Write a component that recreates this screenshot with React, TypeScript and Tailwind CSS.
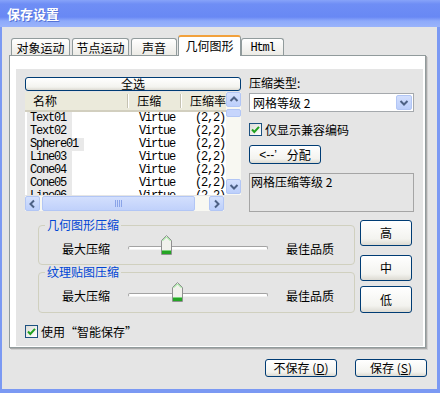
import React from "react";

const btn =
  "border border-[#003c74] rounded-[3px] bg-[linear-gradient(to_bottom,#ffffff,#f3f3ef_75%,#dcdad2)] flex items-center justify-center leading-[12px] text-[12px]";
const mono = "font-['Liberation_Mono',monospace] text-[12px] tracking-[-1.2px]";
const sbBtn =
  "w-[15px] h-[15px] shrink-0 rounded-[2px] border border-[#b2c6f5] bg-[linear-gradient(to_bottom,#d5e1fd,#bccffb)] flex items-center justify-center";

const rows = ["Text01", "Text02", "Sphere01", "Line03", "Cone04", "Cone05", "Line06"];

function Chevron({ dir }: { dir: "up" | "down" | "left" | "right" }) {
  const d = {
    up: "M1.5 6 L5 2.5 L8.5 6",
    down: "M1.5 3 L5 6.5 L8.5 3",
    left: "M6 1.5 L2.5 5 L6 8.5",
    right: "M3 1.5 L6.5 5 L3 8.5",
  }[dir];
  return (
    <svg width="10" height="10" viewBox="0 0 10 10">
      <path d={d} fill="none" stroke="#4d6185" strokeWidth="2" />
    </svg>
  );
}

function Check() {
  return (
    <div className="w-[13px] h-[13px] shrink-0 border border-[#1c5180] bg-[linear-gradient(135deg,#dcdcd7,#ffffff)] flex items-center justify-center">
      <svg width="11" height="11" viewBox="0 0 11 11">
        <path d="M2 5.5 L4.3 8 L9 2.8" fill="none" stroke="#21a121" strokeWidth="2" />
      </svg>
    </div>
  );
}

function Thumb() {
  return (
    <svg width="11" height="20" viewBox="0 0 11 20">
      <path d="M0.5 5.5 L5.5 0.5 L10.5 5.5 V19.5 H0.5 Z" fill="#f1f1ec" stroke="#8f9090" />
      <path d="M1.5 5.9 L5.5 1.9 L9.5 5.9" fill="none" stroke="#86e486" />
      <rect x="1" y="15" width="9" height="1" fill="#7fd67f" />
      <rect x="1" y="16" width="9" height="3" fill="#25a525" />
    </svg>
  );
}

function Slider({ pos }: { pos: number }) {
  return (
    <div className="relative ml-[18px] w-[140px] h-[20px]">
      <div className="absolute left-0 right-0 top-[7px] h-[4px] rounded-[2px] border border-[#a3a3a3] border-b-[#f4f4f4] bg-white" />
      <div className="absolute top-[-4px]" style={{ left: pos }}>
        <Thumb />
      </div>
    </div>
  );
}

function Group({ title, pos, h }: { title: string; pos: number; h: string }) {
  return (
    <fieldset className={`${h} border border-[#d0d0bf] rounded-[4px]`}>
      <legend className="ml-[6px] px-[2px] text-[#0046d5] leading-[12px]">{title}</legend>
      <div className="flex items-center h-[20px] mt-[8px] pl-[23px]">
        <span className="leading-[12px]">最大压缩</span>
        <Slider pos={pos} />
        <span className="ml-[18px] leading-[12px]">最佳品质</span>
      </div>
    </fieldset>
  );
}

const tab =
  "h-[17px] border border-b-0 border-[#919b9c] rounded-t-[3px] bg-[linear-gradient(to_bottom,#ffffff,#ecebe6)] flex items-center justify-center pt-[1px] leading-[12px]";

export default function App() {
  return (
    <div className="w-[440px] h-[393px] bg-[#7b99f3] flex flex-col overflow-hidden font-['Noto_Sans_CJK_SC',sans-serif] text-[12px] text-black">
      <div className="h-[27px] shrink-0 flex items-center pl-[7px] pb-[1px] bg-[linear-gradient(to_bottom,#87a3f9_0px,#6f8ef5_4px,#6888f4_17px,#8eaafa_21px,#9ab3fb_27px)]">
        <span className="text-white font-bold text-[13px] leading-[13px] [text-shadow:1px_1px_0_#5572d6]">保存设置</span>
      </div>

      <div className="flex-1 ml-[2px] mr-[3px] mb-[4px] bg-[#e5e5e5] flex flex-col">
        <div className="flex items-end pt-[8px] pl-[9px]">
          <div className={`${tab} w-[59px]`}>对象运动</div>
          <div className={`${tab} ml-[2px] w-[57px]`}>节点运动</div>
          <div className={`${tab} ml-[2px] w-[46px]`}>声音</div>
          <div className="relative z-10 ml-[1px] w-[63px] h-[21px] -mb-[1px] bg-white border-x border-[#919b9c] border-t-[2px] border-t-[#f2a13c] rounded-t-[3px] flex items-center justify-center pb-[2px] leading-[12px]">
            几何图形
          </div>
          <div className={`${tab} w-[43px] ${mono}`}>Html</div>
        </div>

        <div className="ml-[7px] w-[417px] h-[293px] shrink-0 bg-white border border-[#919b9c] shadow-[1px_1px_0_#a9a9a9,2px_2px_0_#d0d0d0] pt-[13px] pl-[6px] pr-[2px] pb-[1px]">
          <div className="h-full bg-[#e5e5e5] flex flex-col">
            <div className="flex pt-[8px] pl-[9px]">
              <div className="w-[216px] flex flex-col">
                <div className={`${btn} h-[14px]`}>全选</div>
                <div className="mt-[1px] h-[119px] flex flex-col">
                  <div className="flex h-[103px]">
                    <div className="w-[201px] bg-white overflow-hidden flex flex-col">
                      <div className="h-[20px] shrink-0 bg-[#ebeadb] border-b-[2px] border-[#d2cfbf] flex items-center">
                        <div className="w-[107px] pl-[8px] leading-[12px]">名称</div>
                        <div className="w-[2px] h-[14px] border-l border-[#c5c2b2] bg-white" />
                        <div className="w-[53px] pl-[8px] leading-[12px]">压缩</div>
                        <div className="w-[2px] h-[14px] border-l border-[#c5c2b2] bg-white" />
                        <div className="pl-[8px] leading-[12px] whitespace-nowrap">压缩率</div>
                      </div>
                      {rows.map((r) => (
                        <div key={r} className={`${mono} h-[13px] shrink-0 leading-[13px] flex whitespace-nowrap`}>
                          <div className="w-[114px] pl-[2px]">
                            <span className="inline-block h-[13px] min-w-[45px] pl-[3px] pr-[6px] bg-[#e9e9e9]">{r}</span>
                          </div>
                          <div className="w-[56px]">Virtue</div>
                          <div>(2,2)</div>
                        </div>
                      ))}
                    </div>
                    <div className="w-[15px] bg-[#f8f8f2] flex flex-col">
                      <div className={sbBtn}>
                        <Chevron dir="up" />
                      </div>
                      <div className="mt-[2px] h-[8px] rounded-[2px] border border-[#b2c6f5] bg-[#c6d5fc]" />
                      <div className="flex-1" />
                      <div className={`${sbBtn} mb-[1px]`}>
                        <Chevron dir="down" />
                      </div>
                    </div>
                  </div>
                  <div className="flex h-[16px] pt-[1px]">
                    <div className="w-[199px] flex bg-[#f8f8f2]">
                      <div className={sbBtn}>
                        <Chevron dir="left" />
                      </div>
                      <div className="ml-[2px] w-[153px] rounded-[2px] border border-[#b2c6f5] bg-[linear-gradient(to_bottom,#d3dffd,#c0d1fb)] flex items-center justify-center gap-[1px]">
                        {[0, 1, 2, 3].map((i) => (
                          <div key={i} className="w-[1px] h-[7px] bg-[#8aa4e8]" />
                        ))}
                      </div>
                      <div className="flex-1" />
                      <div className={sbBtn}>
                        <Chevron dir="right" />
                      </div>
                    </div>
                  </div>
                </div>
              </div>

              <div className="ml-[8px] w-[165px] flex flex-col">
                <div className="h-[12px] leading-[12px]">压缩类型:</div>
                <div className="mt-[4px] h-[19px] bg-white border border-[#a5a9ad] flex items-center pl-[3px]">
                  <span className="leading-[12px]">网格等级 2</span>
                  <div className="ml-auto mr-[1px] w-[16px] h-[15px] rounded-[2px] border border-[#b2c6f5] bg-[linear-gradient(to_bottom,#d3dffd,#bbcefb)] flex items-center justify-center">
                    <Chevron dir="down" />
                  </div>
                </div>
                <div className="mt-[11px] h-[13px] flex items-center">
                  <Check />
                  <span className="ml-[3px] leading-[12px]">仅显示兼容编码</span>
                </div>
                <div className={`${btn} mt-[9px] h-[19px] w-[72px]`}>
                  <span className="font-['Liberation_Sans',sans-serif]">&lt;--&#8217;</span>
                  <span className="ml-[10px]">分配</span>
                </div>
                <div className="mt-[9px] h-[39px] border border-[#a5a5a5] bg-[#e5e5e5] pl-[1px] pt-[2px] leading-[12px]">
                  网格压缩等级 2
                </div>
              </div>
            </div>

            <div className="flex mt-[7px] ml-[22px]">
              <div className="w-[317px] flex flex-col">
                <Group title="几何图形压缩" pos={33} h="h-[46px]" />
                <div className="mt-[1px]">
                  <Group title="纹理贴图压缩" pos={44} h="h-[47px]" />
                </div>
              </div>
              <div className="ml-[5px] w-[52px] pt-[1px] flex flex-col">
                <div className={`${btn} h-[26px]`}>高</div>
                <div className={`${btn} mt-[9px] h-[26px]`}>中</div>
                <div className={`${btn} mt-[5px] h-[27px]`}>低</div>
              </div>
            </div>

            <div className="mt-[12px] ml-[9px] h-[13px] flex items-center">
              <Check />
              <span className="ml-[3px] leading-[12px]">使用“智能保存”</span>
            </div>
          </div>
        </div>

        <div className="flex justify-end gap-[18px] mt-[11px] pr-[10px]">
          <div className={`${btn} w-[72px] h-[18px]`}>
            不保存 (<span className="underline">D</span>)
          </div>
          <div className={`${btn} w-[72px] h-[18px]`}>
            保存 (<span className="underline">S</span>)
          </div>
        </div>
      </div>
    </div>
  );
}
